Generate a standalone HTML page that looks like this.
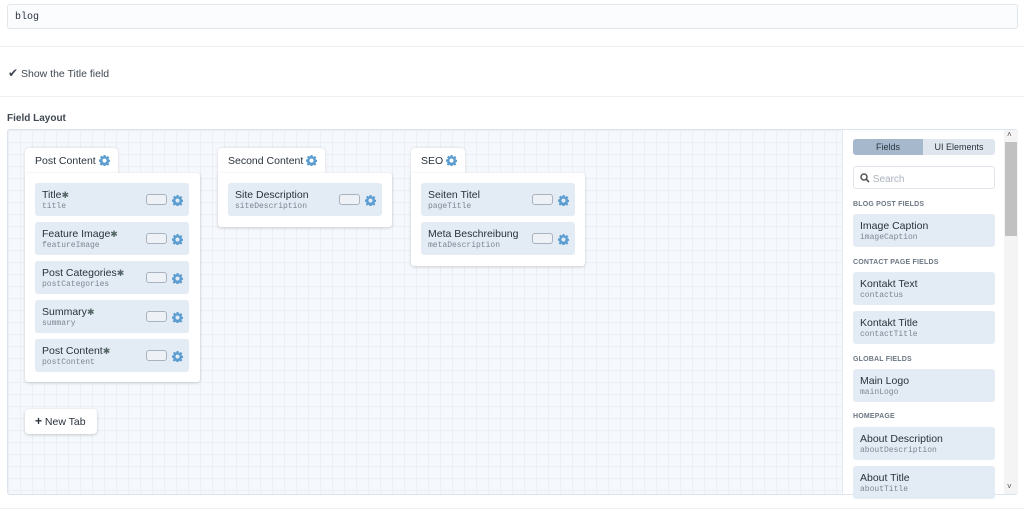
<!DOCTYPE html>
<html><head><style>
*{box-sizing:border-box;margin:0;padding:0}
body{width:1024px;height:509px;background:#fff;font-family:"Liberation Sans",sans-serif;position:relative;overflow:hidden;color:#29323d}
.a{position:absolute}
.mono{font-family:"Liberation Mono",monospace}
.inp{left:7px;top:4px;width:1011px;height:25px;border:1px solid #e1e6eb;background:#fbfcfe;border-radius:3px;font-size:10px;padding:7px 7px}
.hr{left:0;width:1024px;height:1px;background:#eef0f3}
.layout{left:7px;top:129px;width:1011px;height:366px;border:1px solid #dde3ea;border-radius:3px;overflow:hidden;
 background-color:#f5f8fc;background-image:linear-gradient(#ebf0f7 1px,transparent 1px),linear-gradient(90deg,#ebf0f7 1px,transparent 1px);background-size:12px 12px}
.tab{background:#fff;border-radius:4px 4px 0 0;font-size:10.5px;padding:7px 0 0 10px;box-shadow:0 0 3px rgba(0,0,0,.12)}
.body{background:#fff;border-radius:0 3px 3px 3px;box-shadow:0 1px 3px rgba(0,0,0,.18)}
.f{position:absolute;left:10px;width:154px;height:33px;background:#e3ebf4;border-radius:3px;padding:6px 7px 0;font-size:10.5px}
.f small{display:block;font-family:"Liberation Mono",monospace;font-size:8px;color:#7b8794;margin-top:1px}
.f .sw{position:absolute;right:22px;top:11px;width:21px;height:11px;border:1px solid #a9b3bf;border-radius:3px;background:#eef2f6}
.g{display:inline-block;width:11px;height:11px;vertical-align:-2px}
.f .g{position:absolute;right:6px;top:12px}
.side{left:842px;top:130px;width:162px;height:364px;background:#fff;border-left:1px solid #e4e9ef}
.sb{left:1004px;top:130px;width:14px;height:364px;background:#f4f4f4}
.h{position:absolute;left:10px;font-size:7px;font-weight:bold;color:#6b7683;letter-spacing:.2px}
.s{position:absolute;left:10px;width:142px;height:33px;background:#e3ebf4;border-radius:3px;padding:6px 7px 0;font-size:10.5px}
.s small{display:block;font-family:"Liberation Mono",monospace;font-size:8px;color:#7b8794;margin-top:1px}
.ast{font-size:9px;color:#566}
</style></head><body>
<svg width="0" height="0" style="position:absolute"><defs><symbol id="gear" viewBox="0 0 16 16"><path fill="#5b9dd0" d="M6.6 0h2.8l.4 2.2 1.3.6 1.9-1.3 2 2-1.3 1.9.6 1.3 2.2.4v2.8l-2.2.4-.6 1.3 1.3 1.9-2 2-1.9-1.3-1.3.6-.4 2.2H6.6l-.4-2.2-1.3-.6-1.9 1.3-2-2 1.3-1.9-.6-1.3L0 9.4V6.6l2.2-.4.6-1.3-1.3-1.9 2-2 1.9 1.3 1.3-.6zM8 5a3 3 0 100 6 3 3 0 000-6z"/></symbol></defs></svg>
<div class="a inp mono">blog</div>
<div class="a hr" style="top:46px"></div>
<div class="a" style="left:8px;top:66px;font-size:10.5px;color:#3f4852"><span style="font-size:12px">✔</span> Show the Title field</div>
<div class="a hr" style="top:96px"></div>
<div class="a" style="left:7px;top:113px;font-size:10px;font-weight:bold;color:#3f4852">Field Layout</div>
<div class="a layout"></div>

<div class="a tab" style="left:25px;top:148px;width:93px;height:27px">Post Content <svg class="g"><use href="#gear"/></svg></div>
<div class="a body" style="left:25px;top:173px;width:175px;height:209px">
 <div class="f" style="top:10px">Title<span class="ast">✱</span><small>title</small><div class="sw"></div><svg class="g"><use href="#gear"/></svg></div>
 <div class="f" style="top:49px">Feature Image<span class="ast">✱</span><small>featureImage</small><div class="sw"></div><svg class="g"><use href="#gear"/></svg></div>
 <div class="f" style="top:88px">Post Categories<span class="ast">✱</span><small>postCategories</small><div class="sw"></div><svg class="g"><use href="#gear"/></svg></div>
 <div class="f" style="top:127px">Summary<span class="ast">✱</span><small>summary</small><div class="sw"></div><svg class="g"><use href="#gear"/></svg></div>
 <div class="f" style="top:166px">Post Content<span class="ast">✱</span><small>postContent</small><div class="sw"></div><svg class="g"><use href="#gear"/></svg></div>
</div>

<div class="a tab" style="left:218px;top:148px;width:107px;height:27px">Second Content <svg class="g"><use href="#gear"/></svg></div>
<div class="a body" style="left:218px;top:173px;width:174px;height:54px">
 <div class="f" style="top:10px">Site Description<small>siteDescription</small><div class="sw"></div><svg class="g"><use href="#gear"/></svg></div>
</div>

<div class="a tab" style="left:411px;top:148px;width:54px;height:27px">SEO <svg class="g"><use href="#gear"/></svg></div>
<div class="a body" style="left:411px;top:173px;width:174px;height:93px">
 <div class="f" style="top:10px">Seiten Titel<small>pageTitle</small><div class="sw"></div><svg class="g"><use href="#gear"/></svg></div>
 <div class="f" style="top:49px">Meta Beschreibung<small>metaDescription</small><div class="sw"></div><svg class="g"><use href="#gear"/></svg></div>
</div>

<div class="a" style="left:25px;top:409px;width:72px;height:25px;background:#fff;border-radius:4px;box-shadow:0 1px 3px rgba(0,0,0,.2);font-size:10.5px;padding:7px 0 0 10px"><b style="font-size:12px;line-height:10px">+</b> New Tab</div>

<div class="a side">
 <div class="a" style="left:10px;top:9px;width:142px;height:16px;border-radius:3px;background:#dfe6ee;font-size:9px">
  <div class="a" style="left:0;top:0;width:70px;height:16px;background:#a5b8cc;border-radius:3px 0 0 3px;text-align:center;padding-top:3px">Fields</div>
  <div class="a" style="left:70px;top:0;width:72px;height:16px;text-align:center;padding-top:3px">UI Elements</div>
 </div>
 <div class="a" style="left:10px;top:36px;width:142px;height:23px;border:1px solid #dfe4ea;border-radius:3px;font-size:10px;color:#aab3bd;padding:6px 6px"><svg width="10" height="10" viewBox="0 0 10 10" style="vertical-align:-1px"><circle cx="4" cy="4" r="3" fill="none" stroke="#555" stroke-width="1.5"/><path d="M6.2 6.2L9 9" stroke="#555" stroke-width="1.6"/></svg> Search</div>
 <div class="h" style="top:71px">BLOG POST FIELDS</div>
 <div class="s" style="top:84px">Image Caption<small>imageCaption</small></div>
 <div class="h" style="top:129px">CONTACT PAGE FIELDS</div>
 <div class="s" style="top:142px">Kontakt Text<small>contactus</small></div>
 <div class="s" style="top:181px">Kontakt Title<small>contactTitle</small></div>
 <div class="h" style="top:226px">GLOBAL FIELDS</div>
 <div class="s" style="top:239px">Main Logo<small>mainLogo</small></div>
 <div class="h" style="top:283px">HOMEPAGE</div>
 <div class="s" style="top:297px">About Description<small>aboutDescription</small></div>
 <div class="s" style="top:336px">About Title<small>aboutTitle</small></div>
</div>
<div class="a sb">
 <div class="a" style="left:1px;top:12px;width:12px;height:94px;background:#c1c1c1"></div>
 <div class="a" style="left:3px;top:0;font-size:8px;color:#505050">˄</div>
 <div class="a" style="left:3px;top:352px;font-size:8px;color:#505050">˅</div>
</div>
<div class="a hr" style="top:508px"></div>
</body></html>
